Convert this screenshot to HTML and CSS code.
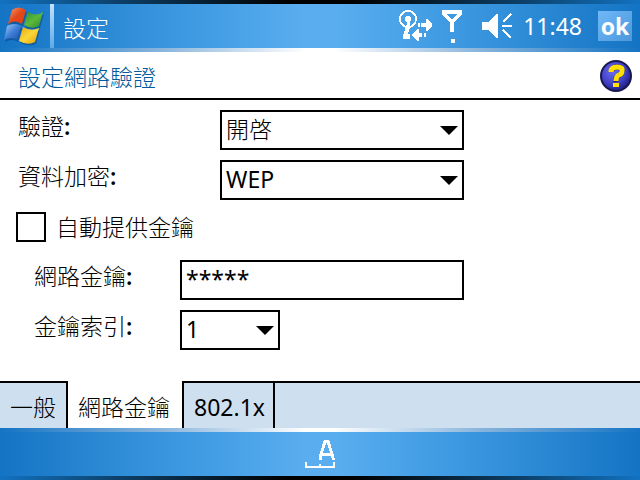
FILE: index.html
```html
<!DOCTYPE html>
<html lang="zh-Hant">
<head>
<meta charset="utf-8">
<title>設定</title>
<link rel="stylesheet" href="styles.css">
</head>
<body>
<header class="bar titlebar">
  <button class="start" type="button" aria-label="Start">
    <svg width="44" height="40" viewBox="0 0 44 40">
      <defs>
        <linearGradient id="red" x1="0" y1="0" x2="1" y2="1"><stop offset="0" stop-color="#f7a070"/><stop offset=".5" stop-color="#e2481c"/><stop offset="1" stop-color="#e8400c"/></linearGradient>
        <linearGradient id="green" x1="0" y1="0" x2="1" y2="1"><stop offset="0" stop-color="#2f8f2c"/><stop offset=".5" stop-color="#5cb83c"/><stop offset="1" stop-color="#2e8a2a"/></linearGradient>
        <linearGradient id="blue" x1="0" y1="0" x2="1" y2="1"><stop offset="0" stop-color="#a8cdf4"/><stop offset=".5" stop-color="#3f7fd6"/><stop offset="1" stop-color="#1c4fa8"/></linearGradient>
        <linearGradient id="yellow" x1="0" y1="0" x2="1" y2="1"><stop offset="0" stop-color="#e8a010"/><stop offset=".5" stop-color="#fcd838"/><stop offset="1" stop-color="#e09c08"/></linearGradient>
      </defs>
      <g transform="translate(1 2)" fill="#0d4a8c" opacity=".6">
        <path d="M10 4Q16 0 24 4L20 18Q13 14 6 18Z"/><path d="M26 6Q33 10 41 6L37 20Q30 23 22 19Z"/>
        <path d="M5 20Q12 16 19 20L15 34Q9 30 2 34Z"/><path d="M21 21Q29 26 37 22L33 36Q26 39 17 35Z"/>
      </g>
      <path fill="url(#red)" d="M10 4Q16 -1 24 4L20 18Q13 13 6 18Z"/>
      <path fill="url(#green)" d="M26 6Q34 11 41 6L37 20Q30 24 22 19Z"/>
      <path fill="url(#blue)" d="M5 20Q12 16 19 20L15 34Q9 30 2 34Z"/>
      <path fill="url(#yellow)" d="M21 21Q29 26 37 22L33 36Q26 40 17 35Z"/>
    </svg>
  </button>
  <h1 class="app-name">設定</h1>
  <div class="status">
    <svg class="icon" width="34" height="34" viewBox="0 0 34 34" shape-rendering="crispEdges">
      <circle cx="9" cy="10" r="8" fill="none" stroke="#fff" stroke-width="2"/>
      <circle cx="9" cy="10" r="3" fill="#fff"/>
      <path fill="#fff" d="M8 12h3v7l-2 6h2v5H4v-4l2-5V17l2-2z"/>
      <path fill="#fff" d="M19 14h2v4h-2zM22 14h5v-4h1l5 5v2l-5 5h-1v-4h-5zM20 20v4h3v4h-3v4h-1l-6-5v-2l6-5zM25 24h2v4h-2z"/>
    </svg>
    <svg class="icon" width="22" height="34" viewBox="0 0 22 34" shape-rendering="crispEdges">
      <path fill="#fff" fill-rule="evenodd" d="M1 1h20v4l-8 9v9H9v-9L1 5zM6 5l5 6 5-6zM10 30h4v4h-4z"/>
    </svg>
    <svg class="icon speaker" width="30" height="28" viewBox="0 0 30 28" shape-rendering="crispEdges">
      <path fill="#fff" d="M0 10h6L14 2h2v24h-2L6 18H0z"/>
      <path fill="none" stroke="#fff" stroke-width="2" d="M21 10l8-8M20 14h10M21 18l8 8"/>
    </svg>
    <time class="clock">11:48</time>
    <button class="ok" type="button">ok</button>
  </div>
</header>

<main class="page">
  <div class="heading">
    <h2 class="heading-text">設定網路驗證</h2>
    <button class="help" type="button" aria-label="Help">
      <svg width="32" height="32" viewBox="0 0 32 32">
        <defs><radialGradient id="ball" cx=".4" cy=".35" r=".65"><stop offset="0" stop-color="#6c6cf0"/><stop offset=".65" stop-color="#4040c4"/><stop offset="1" stop-color="#202080"/></radialGradient></defs>
        <circle cx="16" cy="16" r="15" fill="url(#ball)" stroke="#181850" stroke-width="2"/>
        <path fill="none" stroke="#20206c" stroke-width="5" d="M12 11q1-5 6-4t4 5q-1 3-4 4t-2 6"/>
        <path fill="none" stroke="#ffe000" stroke-width="5" d="M11 12q0-5 6-5t5 4q0 3-3 4t-3 6"/>
        <path fill="#ffe000" d="M13 23h6v4h-6z"/>
      </svg>
    </button>
  </div>

  <form class="form">
    <div class="row wide">
      <label for="auth">驗證<span class="colon">:</span></label>
      <select id="auth"><option>開啓</option></select>
    </div>
    <div class="row wide">
      <label for="enc">資料加密<span class="colon">:</span></label>
      <select id="enc"><option>WEP</option></select>
    </div>
    <div class="check">
      <input type="checkbox" id="auto">
      <label for="auto">自動提供金鑰</label>
    </div>
    <div class="row inset">
      <label for="key">網路金鑰<span class="colon">:</span></label>
      <input type="text" id="key" value="*****">
    </div>
    <div class="row inset">
      <label for="index">金鑰索引<span class="colon">:</span></label>
      <select id="index" class="short"><option>1</option></select>
    </div>
  </form>

  <nav class="tabs">
    <a class="tab" href="#general">一般</a>
    <a class="tab active" href="#key" aria-current="page">網路金鑰</a>
    <a class="tab" href="#dot1x">802.1x</a>
  </nav>
</main>

<footer class="bar softkeys">
  <button class="keyboard" type="button" aria-label="A">
    <svg width="32" height="30" viewBox="0 0 32 30" shape-rendering="crispEdges">
      <path fill="none" stroke="#fff" stroke-width="3" d="M16 21v-2l5-17h3l5 17v2M18 15h9"/>
      <path fill="#fff" d="M1 23h2v4h12v-2h2v2h12v-4h2v6H1z"/>
    </svg>
  </button>
</footer>
</body>
</html>
```
FILE: styles.css
```css
* {
  box-sizing: border-box;
}

body {
  margin: 0;
  min-height: 100vh;
  display: flex;
  flex-direction: column;
  background: #fff;
  color: #000;
  font: 300 23px/32px "Noto Sans", "Noto Sans CJK TC", sans-serif;
}

button,
input,
select {
  font: inherit;
  color: inherit;
  margin: 0;
  padding: 0;
  border: 0;
  border-radius: 0;
  background: none;
  appearance: none;
}

button,
svg {
  display: block;
}

h1,
h2 {
  margin: 0;
  font: inherit;
}

.bar {
  height: 52px;
  color: #fff;
}

.titlebar {
  display: flex;
  align-items: center;
  padding: 0 8px 0 2px;
  background:
    linear-gradient(90deg, #1272c0, #0c3c62 20%, #000 45%, #000 55%, #0c3c62 80%, #1272c0) top / 100% 4px no-repeat,
    linear-gradient(90deg, #1474c4, #88b4dc 25%, #fff 48%, #fff 52%, #88b4dc 75%, #1474c4) bottom / 100% 4px no-repeat,
    linear-gradient(90deg, #1474c4, #3c98e0 28%, #5aaef0 48%, #5aaef0 52%, #3c98e0 72%, #1474c4);
}

.app-name {
  margin-left: 4px;
  padding-left: 9px;
  height: 44px;
  border-left: 4px solid;
  border-image: linear-gradient(#c8e4fc, #5aa8e8) 1;
  line-height: 48px;
}

.status {
  margin-left: auto;
  display: flex;
  align-items: center;
}

.icon {
  margin-right: 8px;
}

.speaker {
  margin: 0 11px;
}

.clock {
  font-weight: 400;
}

.ok {
  margin-left: 16px;
  width: 34px;
  height: 30px;
  background: linear-gradient(135deg, #70b8f8, #4c98dc);
  font-weight: 700;
  line-height: 30px;
}

.page {
  flex: 1;
  display: flex;
  flex-direction: column;
}

.heading {
  display: flex;
  justify-content: space-between;
  align-items: center;
  height: 48px;
  padding: 2px 8px 0 18px;
  border-bottom: 2px solid #000;
  color: #005a9c;
}

.heading-text {
  padding-top: 2px;
}

.form {
  flex: 1;
  display: flex;
  flex-direction: column;
  gap: 10px;
  padding: 10px 16px;
}

.row {
  display: grid;
  padding-left: 2px;
}

.wide {
  grid-template-columns: 202px 244px;
}

.inset {
  grid-template-columns: 146px 284px;
  padding-left: 18px;
}

.colon {
  font-weight: 600;
}

select,
input[type="text"] {
  width: 100%;
  height: 40px;
  padding: 0 4px 2px;
  border: 2px solid #000;
  font-weight: 400;
}

select {
  background: url("data:image/svg+xml,%3Csvg xmlns='http://www.w3.org/2000/svg' width='18' height='9'%3E%3Cpath d='M0 0h18L9 9z'/%3E%3C/svg%3E") right 4px center no-repeat;
}

#auth {
  font-weight: 300;
}

.short {
  width: 100px;
}

.check {
  display: flex;
  align-items: center;
  gap: 10px;
  height: 34px;
  margin-bottom: 6px;
}

input[type="checkbox"] {
  width: 30px;
  height: 30px;
  border: 2px solid #000;
}

input[type="checkbox"]:checked {
  background: #000;
}

.tabs {
  display: flex;
  height: 47px;
  background: linear-gradient(#000, #000) top / 100% 2px no-repeat, #cedff0;
}

.tab {
  padding: 10px 10px 0;
  border-right: 2px solid #000;
  color: inherit;
  text-decoration: none;
}

.active {
  padding-right: 12px;
  background: #fff;
}

.tab:last-child {
  padding-right: 8px;
  font-weight: 400;
}

.softkeys {
  display: flex;
  align-items: center;
  justify-content: center;
  background:
    linear-gradient(90deg, #1474c4, #88b4dc 25%, #fff 48%, #fff 52%, #88b4dc 75%, #1474c4) top / 100% 4px no-repeat,
    linear-gradient(90deg, #1272c0, #0c3c62 20%, #000 45%, #000 55%, #0c3c62 80%, #1272c0) bottom / 100% 4px no-repeat,
    linear-gradient(90deg, #1474c4, #3c98e0 28%, #5aaef0 48%, #5aaef0 52%, #3c98e0 72%, #1474c4);
}
```
